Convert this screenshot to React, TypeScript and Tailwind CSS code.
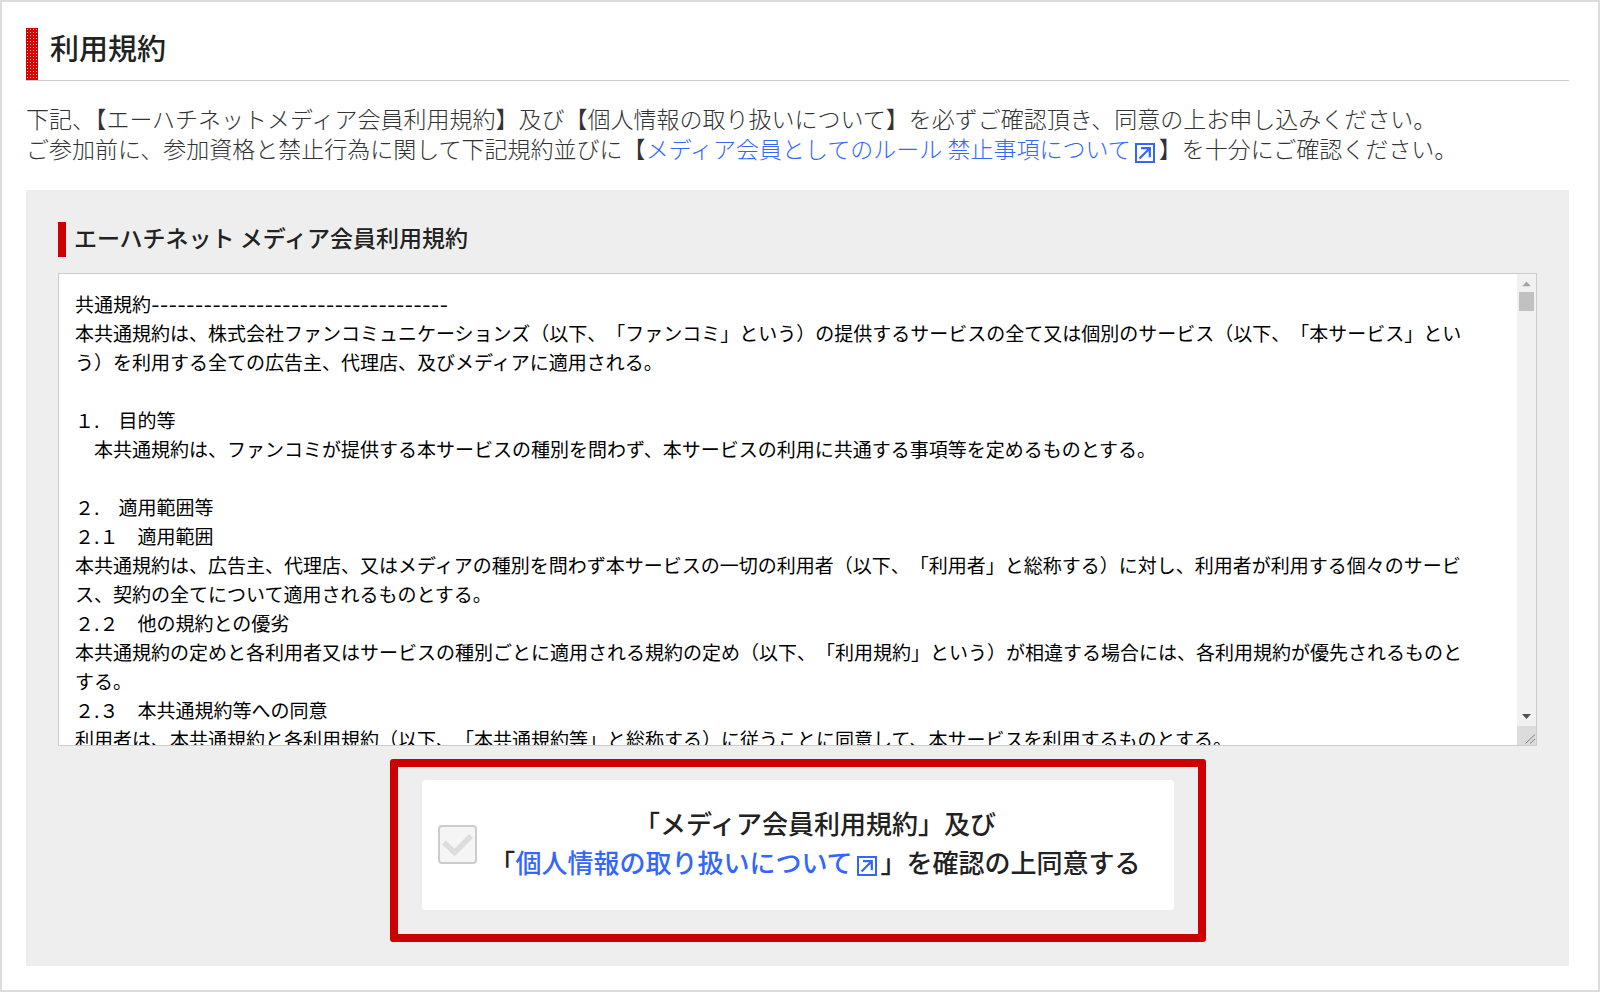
import { useState } from "react";

const TERMS = `共通規約----------------------------------
本共通規約は、株式会社ファンコミュニケーションズ（以下、「ファンコミ」という）の提供するサービスの全て又は個別のサービス（以下、「本サービス」とい
う）を利用する全ての広告主、代理店、及びメディアに適用される。

１.　目的等
　本共通規約は、ファンコミが提供する本サービスの種別を問わず、本サービスの利用に共通する事項等を定めるものとする。

２.　適用範囲等
２.１　適用範囲
本共通規約は、広告主、代理店、又はメディアの種別を問わず本サービスの一切の利用者（以下、「利用者」と総称する）に対し、利用者が利用する個々のサービ
ス、契約の全てについて適用されるものとする。
２.２　他の規約との優劣
本共通規約の定めと各利用者又はサービスの種別ごとに適用される規約の定め（以下、「利用規約」という）が相違する場合には、各利用規約が優先されるものと
する。
２.３　本共通規約等への同意
利用者は、本共通規約と各利用規約（以下、「本共通規約等」と総称する）に従うことに同意して、本サービスを利用するものとする。`;

function ExternalIcon({ className }: { className: string }) {
  return (
    <svg viewBox="0 0 20 20" className={className} fill="none" stroke="currentColor" aria-hidden="true">
      <rect x="1" y="1" width="18" height="18" strokeWidth="2" />
      <path d="M6 5.2h8.800v9M14.500 5.500 4.500 15.500" strokeWidth="2.2" />
    </svg>
  );
}

function ScrollBar() {
  return (
    <div aria-hidden="true" className="flex w-[19px] shrink-0 flex-col items-center bg-[#f1f1f1]">
      <svg viewBox="0 0 19 19" className="h-[18px] w-[19px]">
        <path d="M5 13h9L9.500 8z" fill="#a3a3a3" />
      </svg>
      <div className="h-[19px] w-[15px] bg-[#c1c1c1]" />
      <div className="grow" />
      <svg viewBox="0 0 19 19" className="h-[19px] w-[19px]">
        <path d="M5 7h9l-4.500 5z" fill="#505050" />
      </svg>
      <svg viewBox="0 0 19 19" className="h-[19px] w-[19px] bg-[#dcdcdc]">
        <path d="M8.500 17.500 18 8.500M13 17.500 18 13" stroke="#808080" fill="none" />
      </svg>
    </div>
  );
}

export default function App() {
  const [agreed, setAgreed] = useState(false);
  return (
    <main className="min-h-screen border-2 border-[#ddd] bg-white pt-[26px] pr-[29px] pb-6 pl-6 font-['Noto_Sans_CJK_JP',sans-serif] text-[#333]">
      <header className="flex border-b border-[#ccc]">
        <svg className="h-[52px] w-3 shrink-0" aria-hidden="true">
          <defs>
            <pattern id="mesh" width="3" height="3" patternUnits="userSpaceOnUse">
              <rect width="3" height="3" fill="#d90000" />
              <rect x="1" y="1" width="1" height="1" fill="#ffc4c4" />
            </pattern>
          </defs>
          <rect width="12" height="52" fill="url(#mesh)" />
        </svg>
        <h1 className="pl-3 text-[29px] leading-[38px] font-medium text-[#222]">利用規約</h1>
      </header>

      <p className="mt-[22px] text-[23px] leading-[30px] font-light whitespace-nowrap">
        下記、【エーハチネットメディア会員利用規約】及び【個人情報の取り扱いについて】を必ずご確認頂き、同意の上お申し込みください。
        <br />
        ご参加前に、参加資格と禁止行為に関して下記規約並びに【
        <a href="#rules" className="text-[#3366ff]">
          メディア会員としてのルール 禁止事項について
          <ExternalIcon className="mx-1 inline-block size-5 align-[-5px]" />
        </a>
        】を十分にご確認ください。
      </p>

      <section className="mt-[27px] bg-[#eee] px-8 pt-8 pb-6">
        <h2 className="border-l-8 border-[#c00] pl-2 text-[23px] font-medium text-[#222]">
          <label htmlFor="terms" className="block pb-1 leading-[31px]">
            エーハチネット メディア会員利用規約
          </label>
        </h2>
        <div className="mt-4 flex h-[473px] border border-[#ccc] bg-white">
          <textarea
            id="terms"
            readOnly
            wrap="off"
            value={TERMS}
            className="block min-w-0 grow resize-none overflow-hidden bg-white pt-[17px] pl-4 font-[Inter,'Noto_Sans_CJK_JP',sans-serif] text-[19px] leading-[29px] whitespace-pre text-black outline-none [text-spacing-trim:space-all]"
          />
          <ScrollBar />
        </div>

        <div className="mx-auto mt-[13px] w-[816px] max-w-full rounded-[3px] border-8 border-[#c00] px-6 pt-[13px] pb-6">
          <div className="flex items-center rounded-[4px] bg-white pt-[23px] pr-5 pb-[25px] pl-4">
            <span className="relative flex shrink-0">
              <input
                id="agree"
                type="checkbox"
                checked={agreed}
                onChange={(e) => setAgreed(e.target.checked)}
                className="peer h-[39px] w-[39px] appearance-none rounded-[4px] border-2 border-[#ccc] bg-[#f5f5f5]"
              />
              <svg
                viewBox="0 0 39 39"
                className="pointer-events-none absolute inset-0 h-[39px] w-[39px] text-[#ddd] peer-checked:text-[#c00]"
                fill="none"
                stroke="currentColor"
                aria-hidden="true"
              >
                <path d="M6 17.500 16.500 27.500 33 11" strokeWidth="5.500" />
              </svg>
            </span>
            <label
              htmlFor="agree"
              className="grow pb-1 text-center text-[26px] leading-[39px] font-medium whitespace-nowrap text-[#222]"
            >
              「メディア会員利用規約」及び
              <br />「
              <a href="#privacy" className="text-[#3366ff]">
                個人情報の取り扱いについて
                <ExternalIcon className="mx-1 inline-block size-5 align-[-3px]" />
              </a>
              」を確認の上同意する
            </label>
          </div>
        </div>
      </section>
    </main>
  );
}
